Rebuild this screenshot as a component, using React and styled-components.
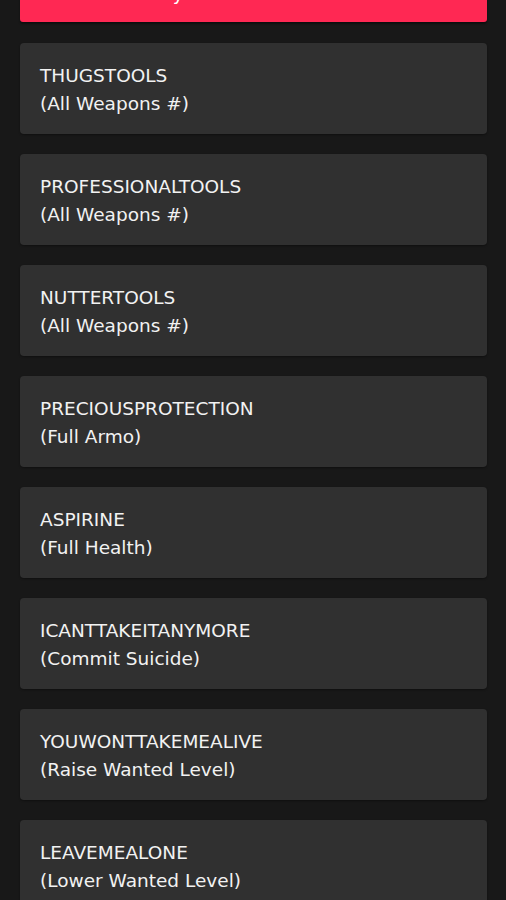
import React from "react";
import styled, { createGlobalStyle } from "styled-components";

const GlobalStyle = createGlobalStyle`
  html, body {
    margin: 0;
    padding: 0;
    background: #181818;
  }
  body {
    font-family: "DejaVu Sans", Verdana, sans-serif;
    overflow: hidden;
  }
`;

const Page = styled.div`
  display: flex;
  flex-direction: column;
  gap: 20px;
  padding: 0 19px 0 20px;
  margin-top: -48px;
`;

// the list is scrolled: only the bottom of the red header is in view
const Header = styled.div`
  height: 70px;
  box-sizing: border-box;
  padding-top: 31px;
  background: #ff2853;
  border-radius: 3px;
  box-shadow: 0 2px 2px rgba(0, 0, 0, 0.45);
  color: #fff;
  font-size: 18.5px;
  line-height: 21px;
  text-align: center;
`;

const Card = styled.div`
  background: #303030;
  border-radius: 4px;
  padding: 19px 20px 16px 20px;
  box-shadow: 0 1px 2px rgba(0, 0, 0, 0.35);
  color: #f2f2f2;
  font-size: 18.5px;
  line-height: 28px;
  margin-top: ${(p) => (p.$first ? "0.5px" : "0")};
`;

const Code = styled.div``;

const Effect = styled.div``;

const cheats = [
  ["THUGSTOOLS", "(All Weapons #)"],
  ["PROFESSIONALTOOLS", "(All Weapons #)"],
  ["NUTTERTOOLS", "(All Weapons #)"],
  ["PRECIOUSPROTECTION", "(Full Armo)"],
  ["ASPIRINE", "(Full Health)"],
  ["ICANTTAKEITANYMORE", "(Commit Suicide)"],
  ["YOUWONTTAKEMEALIVE", "(Raise Wanted Level)"],
  ["LEAVEMEALONE", "(Lower Wanted Level)"],
];

const App = () => (
  <>
    <GlobalStyle />
    <Page>
      <Header>Vice City Cheat Codes Collection</Header>
      {cheats.map(([code, effect], i) => (
        <Card key={code} $first={i === 0}>
          <Code>{code}</Code>
          <Effect>{effect}</Effect>
        </Card>
      ))}
    </Page>
  </>
);

export default App;
